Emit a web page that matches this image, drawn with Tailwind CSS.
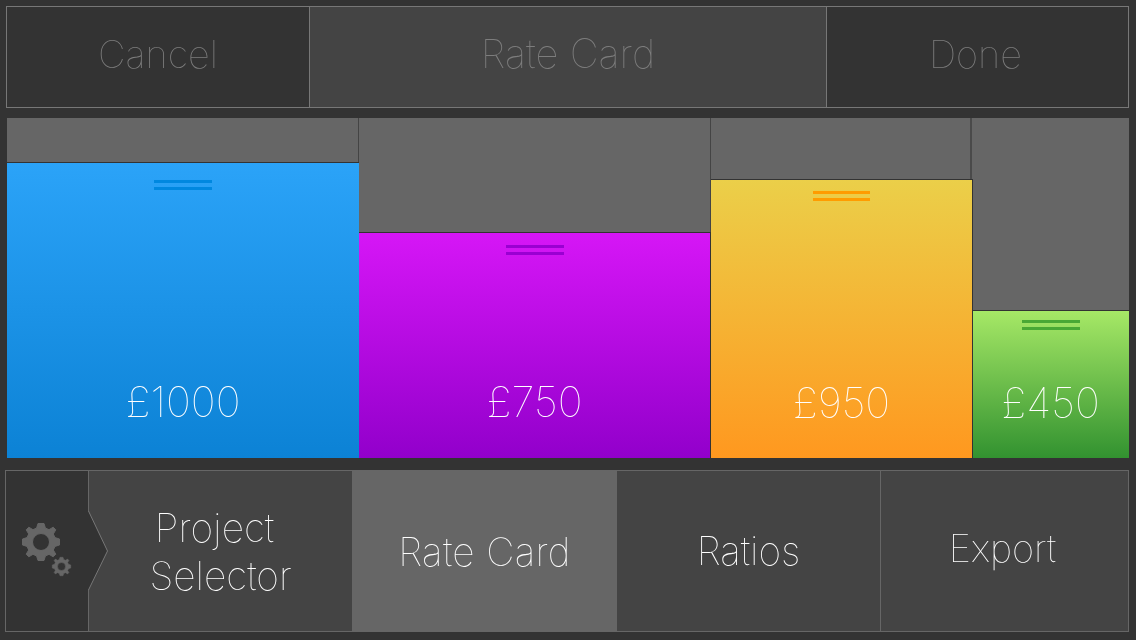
<!doctype html>
<html lang="en">
<head>
  <meta charset="UTF-8">
  <title>Rate Card</title>
  <script src="https://cdn.jsdelivr.net/npm/@tailwindcss/browser@4"></script>
</head>
<body class="bg-[#333333] w-[1136px] h-[640px] overflow-hidden font-['Inter',sans-serif] font-[140] antialiased">
  <div class="pt-1.5 pl-1.5 flex flex-col will-change-transform">
    <!-- top bar -->
    <div class="w-[1123px] h-[102px] flex border border-[#777777] text-[#7d7d7d] text-[38px]">
      <div class="w-[302px] flex items-center justify-center bg-[#333333] pb-[5px]">Cancel</div>
      <div class="w-[518px] flex items-center justify-center bg-[#444444] border-x border-[#777777] pb-[7px] text-[40px]">Rate Card</div>
      <div class="flex-1 flex items-center justify-center bg-[#333333] pb-[5px] pr-1">Done</div>
    </div>

    <!-- chart -->
    <div class="ml-px mt-2.5 w-[1122px] h-[340px] flex text-white text-[42px]">
      <div class="w-[352px] h-full flex flex-col justify-end bg-[#666666] border-r border-[#444444] relative">
        <div class="absolute left-0 bottom-0 w-[353px] h-[296px] flex flex-col items-center border-t border-r border-[#333333] bg-linear-to-b/srgb from-[#2ba3f8] to-[#0c82d5]">
          <div class="mt-[17px] w-[58px] h-[10px] flex flex-col justify-between"><div class="h-[3px] bg-[#0088e0]"></div><div class="h-[3px] bg-[#0088e0]"></div></div>
          <div class="mt-auto mb-[25px]">£1000</div>
        </div>
      </div>
      <div class="w-[352px] h-full flex flex-col justify-end bg-[#666666] border-r border-[#444444] relative">
        <div class="absolute left-0 bottom-0 w-[352px] h-[226px] flex flex-col items-center border-t border-r border-[#333333] bg-linear-to-b/srgb from-[#d616f6] to-[#9200cb]">
          <div class="mt-[12px] w-[58px] h-[10px] flex flex-col justify-between"><div class="h-[3px] bg-[#9a00d2]"></div><div class="h-[3px] bg-[#9a00d2]"></div></div>
          <div class="mt-auto mb-[25px]">£750</div>
        </div>
      </div>
      <div class="w-[261px] h-full flex flex-col justify-end bg-[#666666] border-r-2 border-[#4a4a4a] relative">
        <div class="absolute left-0 bottom-0 w-[262px] h-[279px] flex flex-col items-center border-t border-r border-[#333333] bg-linear-to-b/srgb from-[#ebcf49] to-[#ff981f]">
          <div class="mt-[11px] w-[57px] h-[10px] flex flex-col justify-between"><div class="h-[3px] bg-[#ff9c00]"></div><div class="h-[3px] bg-[#ff9c00]"></div></div>
          <div class="mt-auto mb-[24px]">£950</div>
        </div>
      </div>
      <div class="flex-1 h-full flex flex-col justify-end bg-[#666666]">
        <div class="h-[148px] flex flex-col items-center border-t border-[#333333] bg-linear-to-b/srgb from-[#a6e866] to-[#329230]">
          <div class="mt-[9px] w-[58px] h-[10px] flex flex-col justify-between"><div class="h-[3px] bg-[#49a835]"></div><div class="h-[3px] bg-[#49a835]"></div></div>
          <div class="mt-auto mb-[24px]">£450</div>
        </div>
      </div>
    </div>

    <!-- bottom nav -->
    <div class="-ml-px mt-3 w-[1124px] h-[162px] flex border border-[#666666] text-white text-[39px] bg-[#444444]">
      <div class="relative w-[83px] bg-[#333333] border-r border-[#666666] flex items-center justify-center">
        <svg class="absolute left-0 top-0" width="102" height="160" viewBox="0 0 102 160">
          <g fill="#666666" stroke="#666666" stroke-width="1" stroke-linejoin="round">
            <g transform="translate(35 71)">
              <path fill-rule="evenodd" d="M-3 -18.5 H3 L4.4 -14 L8 -12.3 L12.2 -14.8 L14.8 -12.2 L12.3 -8 L14 -4.4 L18.5 -3 V3 L14 4.4 L12.3 8 L14.8 12.2 L12.2 14.8 L8 12.3 L4.4 14 L3 18.5 H-3 L-4.4 14 L-8 12.3 L-12.2 14.8 L-14.8 12.2 L-12.3 8 L-14 4.4 L-18.5 3 V-3 L-14 -4.4 L-12.3 -8 L-14.8 -12.2 L-12.2 -14.8 L-8 -12.3 L-4.4 -14 Z M0 -8.5 A8.5 8.5 0 1 0 0 8.5 A8.5 8.5 0 1 0 0 -8.5 Z"/>
            </g>
            <g transform="translate(55.5 95.5) scale(0.5)">
              <path fill-rule="evenodd" d="M-3 -18.5 H3 L4.4 -14 L8 -12.3 L12.2 -14.8 L14.8 -12.2 L12.3 -8 L14 -4.4 L18.5 -3 V3 L14 4.4 L12.3 8 L14.8 12.2 L12.2 14.8 L8 12.3 L4.4 14 L3 18.5 H-3 L-4.4 14 L-8 12.3 L-12.2 14.8 L-14.8 12.2 L-12.3 8 L-14 4.4 L-18.5 3 V-3 L-14 -4.4 L-12.3 -8 L-14.8 -12.2 L-12.2 -14.8 L-8 -12.3 L-4.4 -14 Z M0 -8 A8 8 0 1 0 0 8 A8 8 0 1 0 0 -8 Z"/>
            </g>
          </g>
          <path d="M81 40 H82.5 L101.5 80 L82.5 119 H81 Z" fill="#333333"/>
          <path d="M82.5 40 L101.5 80 L82.5 119" fill="none" stroke="#777777" stroke-width="1"/>
        </svg>
      </div>
      <div class="w-[263px] flex flex-col items-center justify-center leading-[48px] pt-0.5">
        <span class="pr-3">Project</span>
        <span>Selector</span>
      </div>
      <div class="w-[265px] flex items-center justify-center bg-[#666666] pt-[3px] tracking-[0.3px]">Rate Card</div>
      <div class="w-[264px] flex items-center justify-center border-r border-[#666666] pt-px">Ratios</div>
      <div class="flex-1 flex items-center justify-center pb-1.5 pr-1 text-[38px]">Export</div>
    </div>
  </div>
</body>
</html>
